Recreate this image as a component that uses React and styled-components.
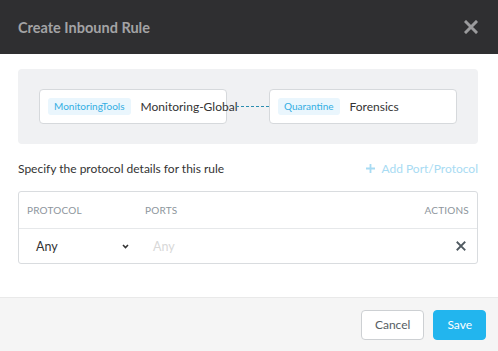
import React from "react";
import styled, { createGlobalStyle } from "styled-components";

const GlobalStyle = createGlobalStyle`
  html, body {
    margin: 0;
    padding: 0;
    background: #ffffff;
  }
  body {
    font-family: "Lato", "Open Sans", sans-serif;
  }
`;

const Modal = styled.div`
  width: 498px;
  height: 351px;
  display: flex;
  flex-direction: column;
  background: #fff;
  overflow: hidden;
`;

const Header = styled.div`
  height: 54px;
  flex: none;
  background: #2f2f31;
  display: flex;
  align-items: center;
  justify-content: space-between;
  padding: 0 20px 0 18px;
  box-sizing: border-box;
`;

const Title = styled.h1`
  margin: 0;
  font-size: 14.5px;
  font-weight: 700;
  color: #a3a3a5;
`;

const CloseButton = styled.button`
  border: 0;
  background: none;
  padding: 0;
  width: 14px;
  height: 14px;
  display: flex;
  cursor: pointer;
`;

const Body = styled.div`
  flex: 1;
  padding: 15px 20px 0 18px;
`;

const Panel = styled.div`
  background: #f0f1f3;
  border-radius: 4px;
  padding: 20px 21px 20px 21px;
  display: flex;
  align-items: center;
`;

const Node = styled.div`
  width: 188px;
  height: 35px;
  box-sizing: border-box;
  border: 1px solid #d6d9dc;
  border-radius: 4px;
  background: #fff;
  display: flex;
  align-items: center;
  padding-left: 8px;
  gap: 10px;
  white-space: nowrap;
`;

const Tag = styled.span`
  background: #eaf6fd;
  color: #33aee3;
  font-size: 10px;
  height: 17px;
  line-height: 17px;
  padding: 0 6px;
  border-radius: 3px;
`;

const NodeName = styled.span`
  font-size: 12px;
  color: #333;
`;

const Connector = styled.div`
  flex: 1;
  margin-left: 9px;
  border-top: 1px dashed #2b8db0;
`;

const SectionRow = styled.div`
  display: flex;
  justify-content: space-between;
  align-items: center;
  margin-top: 16px;
  height: 16px;
`;

const SectionLabel = styled.span`
  font-size: 12px;
  color: #333;
`;

const AddLink = styled.span`
  font-size: 12px;
  color: #a8dbf3;
  display: flex;
  align-items: center;
  gap: 6px;
`;

const Table = styled.div`
  margin-top: 15px;
  border: 1px solid #d9dcdf;
  border-radius: 3px;
`;

const Row = styled.div`
  display: grid;
  grid-template-columns: 118px 1fr auto;
  align-items: center;
  height: ${(p) => p.$height}px;
  padding: 0 8px 0 8px;
  border-bottom: ${(p) => (p.$divider ? "1px solid #e6e8ea" : "none")};
`;

const HeadCell = styled.span`
  font-size: 10px;
  color: #8d959c;
  letter-spacing: 0.2px;
  text-transform: uppercase;
`;

const Select = styled.div`
  display: flex;
  align-items: center;
  justify-content: space-between;
  padding: 0 0 0 9px;
  margin-right: 16px;
  font-size: 12.5px;
  color: #333;
`;

const Placeholder = styled.span`
  font-size: 12.5px;
  color: #d8d8d8;
  padding-left: 8px;
`;

const RemoveButton = styled.span`
  display: flex;
  padding-right: 3px;
`;

const Footer = styled.div`
  height: 54px;
  flex: none;
  box-sizing: border-box;
  background: #f5f5f5;
  border-top: 1px solid #e9e9e9;
  display: flex;
  justify-content: flex-end;
  align-items: center;
  gap: 9px;
  padding-right: 12px;
`;

const Button = styled.button`
  height: 30px;
  padding: 0 13px;
  border-radius: 4px;
  font-family: inherit;
  font-size: 12px;
  cursor: pointer;
  border: 1px solid ${(p) => (p.$primary ? "#22b5ee" : "#cdd0d3")};
  background: ${(p) => (p.$primary ? "#22b5ee" : "#fff")};
  color: ${(p) => (p.$primary ? "#fff" : "#565d63")};
`;

const XIcon = ({ size, color, width }) => (
  <svg width={size} height={size} viewBox="0 0 14 14">
    <path
      d="M2 2 L12 12 M12 2 L2 12"
      stroke={color}
      strokeWidth={width}
      strokeLinecap="square"
    />
  </svg>
);

const Chevron = () => (
  <svg width="7" height="5" viewBox="0 0 7 5">
    <path d="M1 1 L3.5 3.5 L6 1" stroke="#333" strokeWidth="1.6" fill="none" />
  </svg>
);

const nodes = [
  { tag: "MonitoringTools", name: "Monitoring-Global" },
  { tag: "Quarantine", name: "Forensics" },
];

export default function App() {
  return (
    <>
      <GlobalStyle />
      <Modal>
        <Header>
          <Title>Create Inbound Rule</Title>
          <CloseButton aria-label="Close">
            <XIcon size={14} color="#9b9b9d" width={3} />
          </CloseButton>
        </Header>
        <Body>
          <Panel>
            <Node>
              <Tag>{nodes[0].tag}</Tag>
              <NodeName>{nodes[0].name}</NodeName>
            </Node>
            <Connector />
            <Node>
              <Tag>{nodes[1].tag}</Tag>
              <NodeName>{nodes[1].name}</NodeName>
            </Node>
          </Panel>
          <SectionRow>
            <SectionLabel>Specify the protocol details for this rule</SectionLabel>
            <AddLink>
              <svg width="9" height="9" viewBox="0 0 9 9">
                <path d="M4.5 0 V9 M0 4.5 H9" stroke="#a8dbf3" strokeWidth="1.8" />
              </svg>
              Add Port/Protocol
            </AddLink>
          </SectionRow>
          <Table>
            <Row $height={36} $divider>
              <HeadCell>Protocol</HeadCell>
              <HeadCell>Ports</HeadCell>
              <HeadCell>Actions</HeadCell>
            </Row>
            <Row $height={34}>
              <Select>
                Any
                <Chevron />
              </Select>
              <Placeholder>Any</Placeholder>
              <RemoveButton>
                <XIcon size={10} color="#4f5960" width={2.6} />
              </RemoveButton>
            </Row>
          </Table>
        </Body>
        <Footer>
          <Button>Cancel</Button>
          <Button $primary>Save</Button>
        </Footer>
      </Modal>
    </>
  );
}
